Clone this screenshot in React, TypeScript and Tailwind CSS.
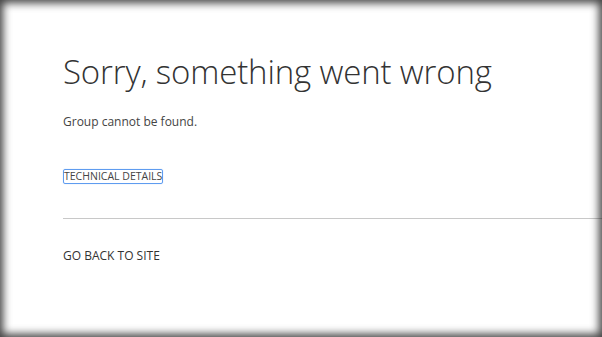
export default function App() {
  return (
    <div className="relative h-[337px] w-full overflow-hidden bg-white font-['Open_Sans',sans-serif] text-[#333333]">
      <div className="pl-[63px] pt-[50px]">
        <h1 className="text-[33px] font-light leading-[44px] tracking-[-0.15px] text-[#333333]">
          Sorry, something went wrong
        </h1>
        <p className="mt-[20px] text-[12px] leading-[16px] text-[#444444]">Group cannot be found.</p>
        <div className="mt-[32px]">
          <button className="rounded-[2px] border border-[#5f9cf0] px-0 text-[10.5px] leading-[13px] text-[#444444] shadow-[0_0_1px_#9cc0f5]">
            TECHNICAL DETAILS
          </button>
        </div>
        <div className="mt-[32px] h-px bg-[#c8c8c8]" />
        <div className="mt-[29px] text-[12px] leading-[16px] text-[#333333]">GO BACK TO SITE</div>
      </div>
      <div className="pointer-events-none absolute inset-0 shadow-[inset_0_0_9px_3px_rgba(0,0,0,0.75)]" />
    </div>
  );
}
